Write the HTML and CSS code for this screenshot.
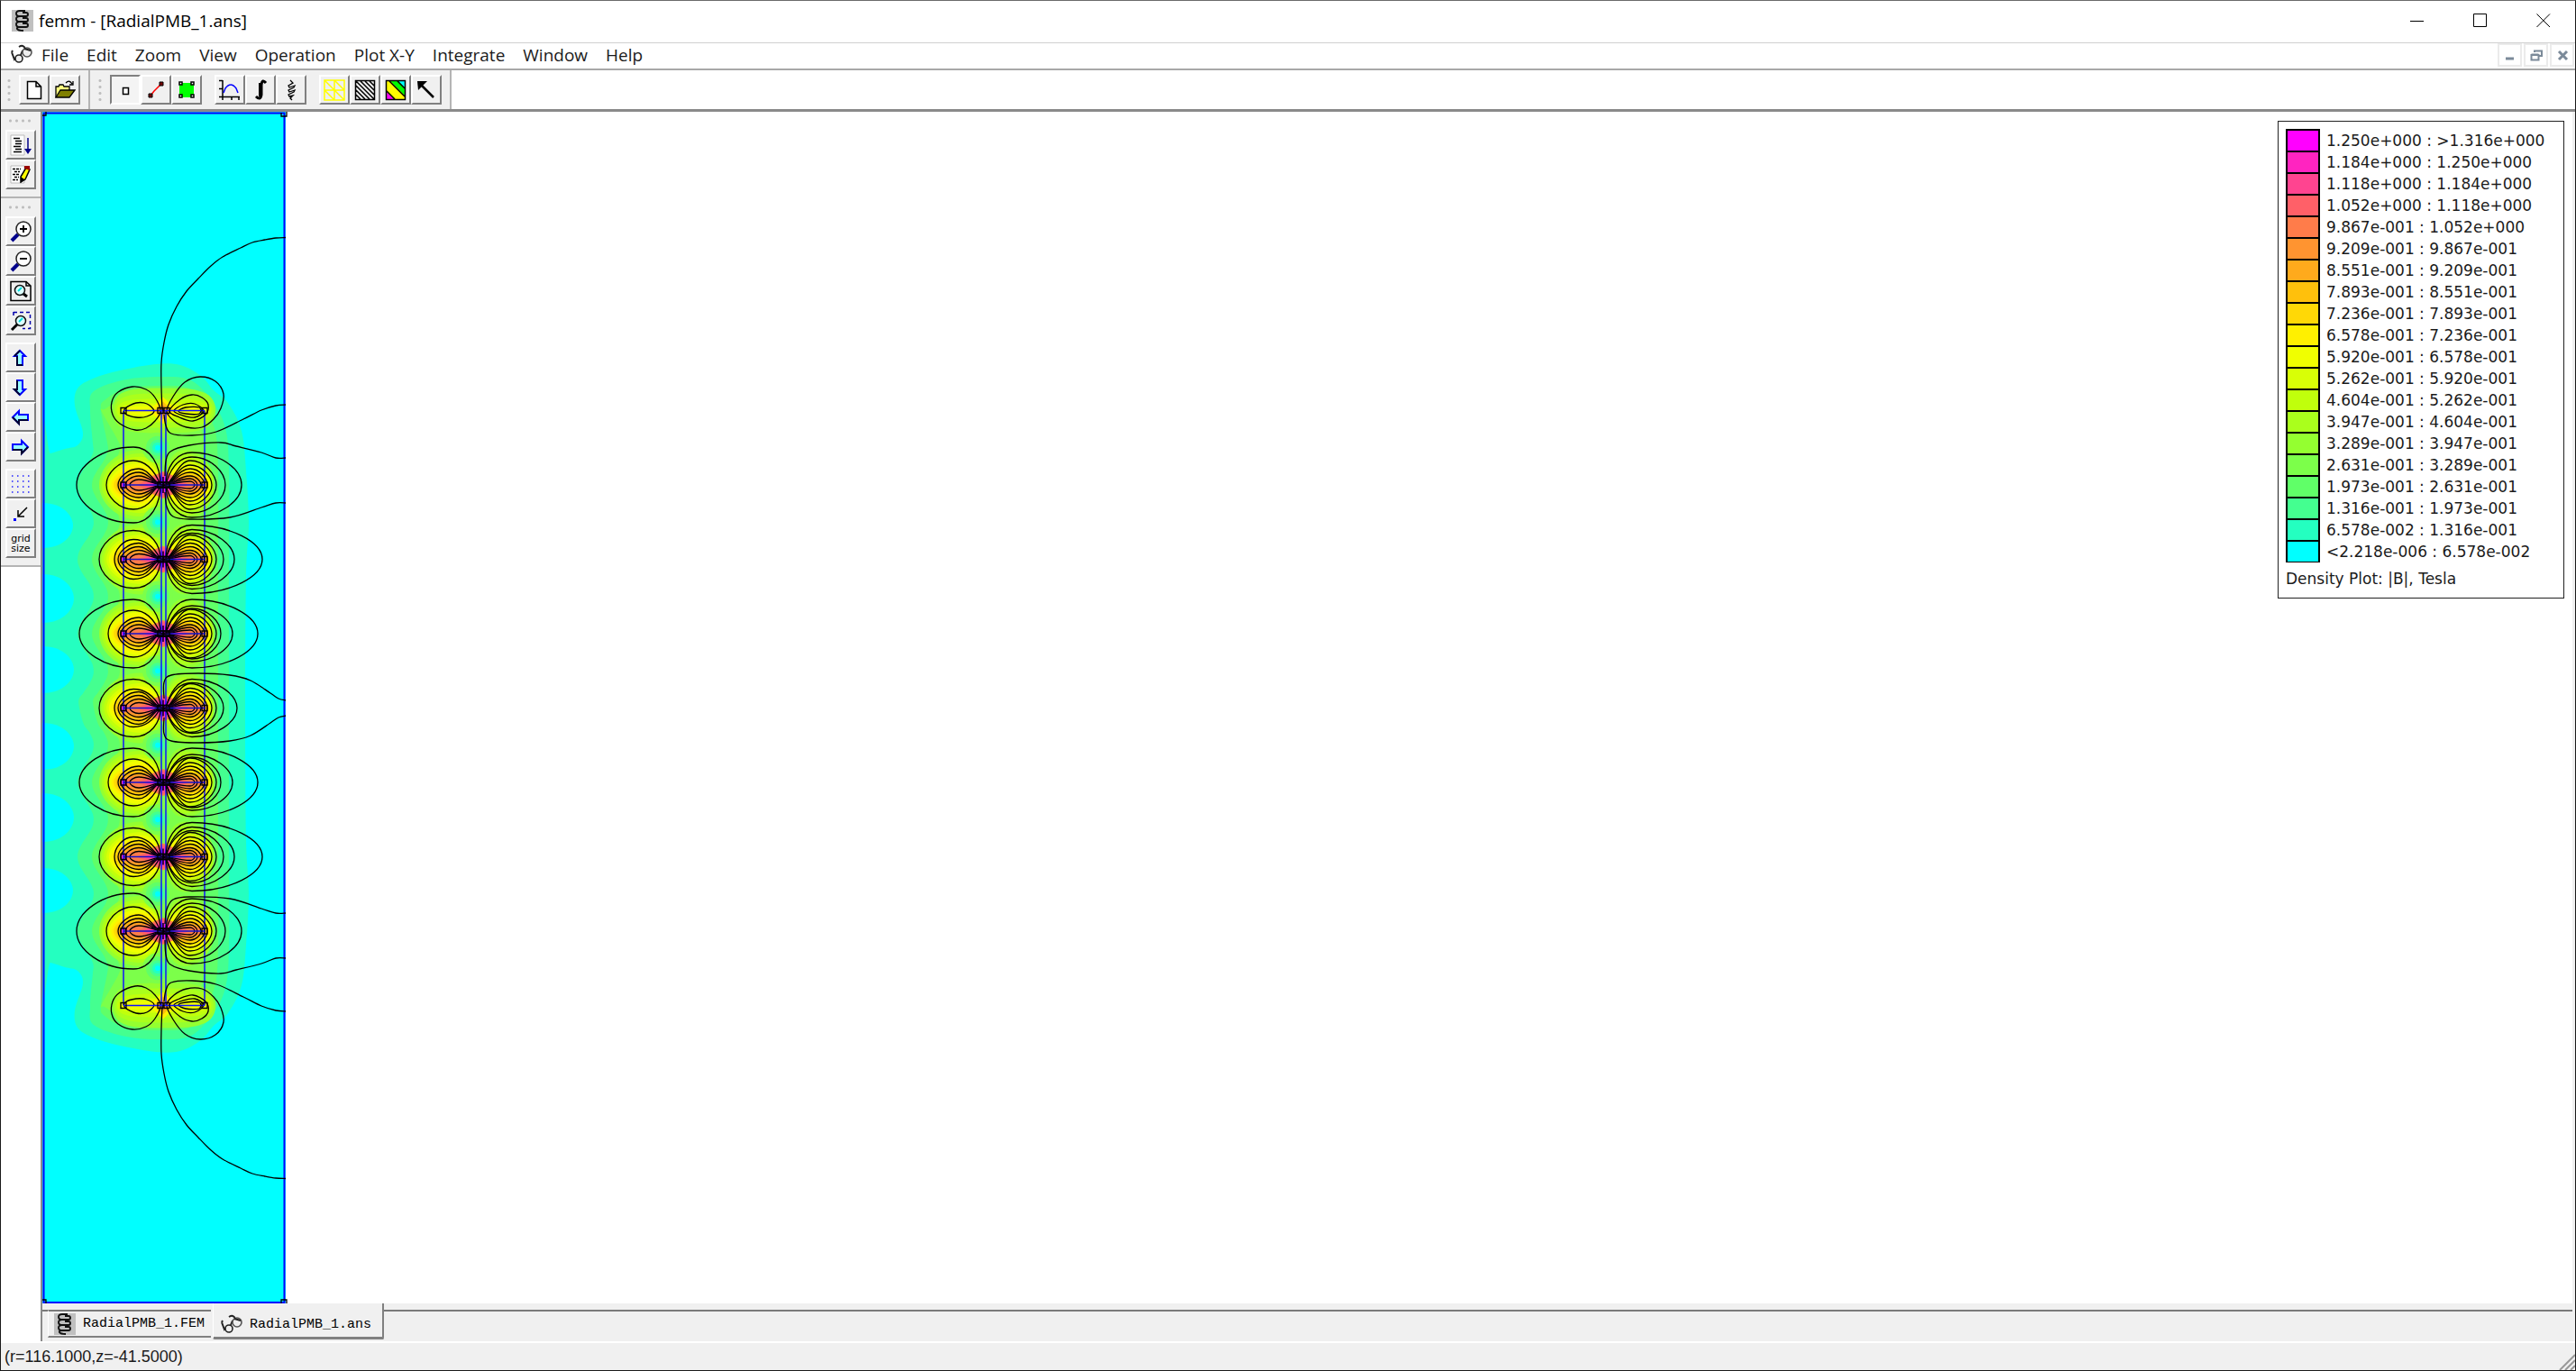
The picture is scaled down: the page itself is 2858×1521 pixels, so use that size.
FILE: index.html
```html
<!DOCTYPE html>
<html lang="en">
<head>
<meta charset="utf-8">
<title>femm - [RadialPMB_1.ans]</title>
<link rel="stylesheet" href="styles.css">
</head>
<body>
<svg class="defs" aria-hidden="true">
  <symbol id="coil" viewBox="0 0 24 24"><rect width="24" height="24" fill="#c0c0c0"/><path d="M15 1H9q-4 0-4 3t4 3h7q2 0 2-2t-2-2h-4M9 7q-4 0-4 3t4 3h7q2 0 2-2t-2-2h-4M9 13q-4 0-4 3t4 3h7q2 0 2-2t-2-2h-4M9 19q-4 0-3 2t7 2" fill="none" stroke="#111" stroke-width="1.900"/></symbol>
  <symbol id="glasses" viewBox="0 0 24 24"><path d="M1 9l3 8 4-4M9 3q5-3 7 2M1 9l1-2M11 12l2-5" fill="none" stroke="#222" stroke-width="2"/><circle cx="9" cy="16" r="4" fill="#eee" stroke="#222" stroke-width="1.6"/><circle cx="18" cy="9" r="5" fill="#eee" stroke="#555" stroke-width="1.6"/><path d="M15 5l7 2" stroke="#222" stroke-width="2"/></symbol>
</svg>
<header class="titlebar">
  <svg class="ico"><use href="#coil"/></svg>
  <h1 class="title">femm - [RadialPMB_1.ans]</h1>
  <div class="winbtns">
    <button aria-label="Minimize"><svg viewBox="0 0 16 16"><path d="M0 8.500H15"/></svg></button>
    <button aria-label="Maximize"><svg viewBox="0 0 16 16"><path d="M.5.500H14.500V14.500H.5Z"/></svg></button>
    <button aria-label="Close"><svg viewBox="0 0 16 16"><path d="M.5.500L15 15M15 .5L.5 15"/></svg></button>
  </div>
</header>
<nav class="menubar">
  <svg class="ico"><use href="#glasses"/></svg>
  <button>File</button><button>Edit</button><button>Zoom</button><button>View</button><button>Operation</button><button>Plot X-Y</button><button>Integrate</button><button>Window</button><button>Help</button>
  <div class="mdibtns">
    <button aria-label="Minimize document"><svg viewBox="0 0 14 14"><path d="M2 11H11" stroke-width="3"/></svg></button>
    <button aria-label="Restore document"><svg viewBox="0 0 14 14"><path d="M5 4V2.500H13V8H10M1.500 7H9.500V12.500H1.500ZM1.500 6.500H9.500" stroke-width="2"/></svg></button>
    <button aria-label="Close document"><svg viewBox="0 0 14 14"><path d="M3 3L12 12M12 3L3 12" stroke-width="3"/></svg></button>
  </div>
</nav>
<div class="toolbars">
  <div class="bar">
    <span class="grip"></span>
    <div class="group">
      <button class="tool" aria-label="New"><svg viewBox="0 0 24 24"><path d="M4.500 2.500H14L19.500 8V21.500H4.500ZM14 2.500V8H19.500" fill="#fff" stroke="#000" stroke-width="1.500"/></svg></button>
      <button class="tool" aria-label="Open"><svg viewBox="0 0 24 24"><path d="M2 20V8H5L6 6H10L11 8H17V12" fill="#ffff80" stroke="#000" stroke-width="1.300"/><path d="M2 20L7 12H23L17 20Z" fill="#808000" stroke="#000" stroke-width="1.300"/><path d="M13 4Q17 0 20 5M21 2V6H17" fill="none" stroke="#000" stroke-width="1.300"/></svg></button>
    </div>
  </div>
  <div class="bar">
    <span class="grip"></span>
    <div class="group">
      <button class="tool pressed" aria-label="Point mode"><svg viewBox="0 0 24 24"><path d="M9.500 9.500H15.500V16.500H9.500Z" fill="#fff" stroke="#000" stroke-width="1.500"/></svg></button>
      <button class="tool" aria-label="Line mode"><svg viewBox="0 0 24 24"><path d="M6 18L10 13 12 11 18 5" fill="none" stroke="#f00" stroke-width="1.500"/><path d="M4 16H8V20H4ZM16 3H20V7H16Z" fill="#700" stroke="#000"/></svg></button>
      <button class="tool" aria-label="Area mode"><svg viewBox="0 0 24 24"><path d="M4 4H20V20H4Z" fill="#0f0"/><path d="M4 3H7V6H4ZM17 3H20V6H17ZM4 17H7V20H4ZM17 17H20V20H17Z" fill="#fff" stroke="#000" stroke-width="1.500"/></svg></button>
    </div>
    <div class="group">
      <button class="tool" aria-label="Plot values"><svg viewBox="0 0 24 24"><path d="M4 1V20M0 1.500H4M0 10.500H4M0 19.500H23M14 20V23M22 20V23M4 20V23" fill="none" stroke="#000" stroke-width="1.500"/><path d="M5 15L7 10Q13 2 19 10L21 15" fill="none" stroke="#00f" stroke-width="1.500"/></svg></button>
      <button class="tool" aria-label="Line integral"><svg viewBox="0 0 24 24"><path d="M18 4Q14-1 13 6V17Q12 24 7 19" fill="none" stroke="#000" stroke-width="3"/><path d="M12 4V19" stroke="#000" stroke-width="4"/></svg></button>
      <button class="tool" aria-label="Circuit properties"><svg viewBox="0 0 24 24"><path d="M11 1L14 4 9 7 10 9 16 7 15 9 9 12 10 14 16 12 15 14 9 17 10 19 14 18 11 21 13 23" fill="none" stroke="#000" stroke-width="1.300"/></svg></button>
    </div>
    <div class="group">
      <button class="tool" aria-label="Show mesh"><svg viewBox="0 0 24 24"><path d="M1 1H23V23H1ZM12 1V23M1 12H23M1 1L23 23M12 1L23 12M1 12L12 23" fill="none" stroke="#ff0" stroke-width="1.500"/></svg></button>
      <button class="tool" aria-label="Contour plot"><svg viewBox="0 0 24 24"><path d="M1.500 1.500H22.500V22.500H1.500ZM2 2L22 22M7 2L22 17M12 2L22 12M17 2L22 7M2 7L17 22M2 12L12 22M2 17L7 22" fill="none" stroke="#000" stroke-width="1.500"/></svg></button>
      <button class="tool" aria-label="Density plot"><svg viewBox="0 0 24 24"><path d="M1 1H23V23H1Z" fill="#ff0"/><path d="M5 1L23 19V1Z" fill="#0f0"/><path d="M14 1L23 10V1Z" fill="#0ff"/><path d="M1 13L11 23H1Z" fill="#f0f"/><path d="M1.500 1.500H22.500V22.500H1.500ZM5 2L22 19M14 2L22 10M2 13L11 22" fill="none" stroke="#000" stroke-width="1.500"/></svg></button>
      <button class="tool" aria-label="Vector plot"><svg viewBox="0 0 24 24"><path d="M5 5L20 20" stroke="#000" stroke-width="2.500"/><path d="M2 2H13L3 12Z"/></svg></button>
    </div>
  </div>
</div>
<div class="main">
  <aside class="side">
    <div class="sidebar">
      <span class="vgrip"></span>
      <div class="vgroup">
        <button class="tool" aria-label="Console"><svg viewBox="0 0 24 24"><path d="M1 1H16V23H1Z" fill="#fff" stroke="#bbb"/><path d="M4 4.500H11M6 7.500H13M6 10.500H13M4 13.500H12M6 16.500H13M4 19.500H13" stroke="#000" stroke-width="1.500"/><path d="M20 4V18" stroke="#008" stroke-width="1.500"/><path d="M16 16H24L20 22Z" fill="#008"/></svg></button>
        <button class="tool" aria-label="Run script"><svg viewBox="0 0 24 24"><path d="M1 2H16V21H1Z" fill="#fff" stroke="#bbb"/><path d="M3 5.500H12M5 8.500H11M3 11.500H10M5 14.500H10M3 17.500H9" stroke="#000" stroke-width="1.500" stroke-dasharray="3 1"/><path d="M18 4L22 6 17 17 12 20 12 14Z" fill="#ff0" stroke="#000" stroke-width="1.500"/><path d="M12 14L16 17 12 21Z"/><path d="M16 2H22V7L16 5Z" fill="#900"/></svg></button>
      </div>
    </div>
    <div class="sidebar">
      <span class="vgrip"></span>
      <div class="vgroup">
        <button class="tool" aria-label="Zoom in"><svg viewBox="0 0 24 24"><path d="M2 22L9 15" stroke="#00008b" stroke-width="4"/><circle cx="15" cy="9" r="8" fill="#fff" stroke="#222" stroke-width="1.500"/><path d="M11 9H19M15 5V13" stroke="#000" stroke-width="1.800"/></svg></button>
        <button class="tool" aria-label="Zoom out"><svg viewBox="0 0 24 24"><path d="M2 22L9 15" stroke="#00008b" stroke-width="4"/><circle cx="15" cy="9" r="8" fill="#fff" stroke="#222" stroke-width="1.500"/><path d="M11 9H19" stroke="#000" stroke-width="1.800"/></svg></button>
        <button class="tool" aria-label="Zoom to fit"><svg viewBox="0 0 24 24"><path d="M1 1.500H18L23 6V22.500H1Z" fill="#eee" stroke="#000" stroke-width="1.500"/><path d="M18 1V6H23" fill="none" stroke="#000" stroke-width="1.500"/><circle cx="11" cy="11" r="5.500" fill="#dff" stroke="#111" stroke-width="1.500"/><path d="M15 15L19 18" stroke="#000" stroke-width="3"/><path d="M9 12L13 8" stroke="#0dd" stroke-width="2"/></svg></button>
        <button class="tool" aria-label="Zoom window"><svg viewBox="0 0 24 24"><path d="M4 2.500H22.500V20.500H14M4 2V8" fill="none" stroke="#00a" stroke-width="1.500" stroke-dasharray="4 3"/><circle cx="12" cy="12" r="5.500" fill="#dff" stroke="#111" stroke-width="1.500"/><path d="M2 22L8 16" stroke="#000" stroke-width="3"/><path d="M10 13L14 9" stroke="#0dd" stroke-width="2"/></svg></button>
      </div>
      <div class="vgroup">
        <button class="tool" aria-label="Pan up"><svg viewBox="0 0 24 24"><path class="arrow" d="M11 4L17 10H14V20H8V10H5Z"/><path class="shade" d="M5 10L11 4M8 10V20H14"/></svg></button>
        <button class="tool" aria-label="Pan down"><svg viewBox="0 0 24 24"><path class="arrow" d="M11 20L17 14H14V4H8V14H5Z"/><path class="shade" d="M8 4V14H5L11 20"/></svg></button>
        <button class="tool" aria-label="Pan left"><svg viewBox="0 0 24 24"><path class="arrow" d="M3 12L10 5V9H20V15H10V19Z"/><path class="shade" d="M3 12L10 19V15H20"/></svg></button>
        <button class="tool" aria-label="Pan right"><svg viewBox="0 0 24 24"><path class="arrow" d="M20 12L13 5V9H3V15H13V19Z"/><path class="shade" d="M3 15H13V19L20 12"/></svg></button>
      </div>
      <div class="vgroup">
        <button class="tool" aria-label="Show grid"><svg viewBox="0 0 24 24"><path d="M2 3H22M2 9H22M2 15H22M2 21H22" stroke="#22f" stroke-width="1.500" stroke-dasharray="1.500 4.500"/></svg></button>
        <button class="tool" aria-label="Snap to grid"><svg viewBox="0 0 24 24"><path d="M19 5L9 15M9 8V15H16" fill="none" stroke="#000" stroke-width="1.500"/><path d="M4 17H7V20H4Z" fill="#00f"/></svg></button>
        <button class="tool gridsize">grid<br>size</button>
      </div>
    </div>
  </aside>
  <section class="document">
    <div class="view">
      <svg class="plot" id="plot" viewBox="47 124 273 1322" preserveAspectRatio="xMinYMin meet" role="img" aria-label="Flux density plot"></svg>
      <div class="legend">
        <ul id="legend"></ul>
        <p>Density Plot: |B|, Tesla</p>
      </div>
    </div>
    <div class="tabs">
      <span class="edge"></span>
      <button class="tab"><svg class="ico"><use href="#coil"/></svg>RadialPMB_1.FEM</button>
      <button class="tab active"><svg class="ico"><use href="#glasses"/></svg>RadialPMB_1.ans</button>
      <span class="rest"></span>
    </div>
  </section>
</div>
<footer class="status"><span>(r=116.1000,z=-41.5000)</span>
  <svg class="resize" viewBox="0 0 18 18"><path d="M1 18L18 1M7 18L18 7M13 18L18 13" stroke="#999" stroke-width="2"/></svg>
</footer>
<script src="plot.js"></script>
</body>
</html>
```
FILE: styles.css
```css
* { box-sizing: border-box; }
body {
  margin: 0;
  height: 100vh;
  display: flex;
  flex-direction: column;
  background: #fff;
  border: 1px solid #1a1a1a;
  border-top-color: #6b6b6b;
  font-family: "Open Sans", "Noto Sans", sans-serif;
  color: #1b1b1b;
  overflow: hidden;
}
button {
  font: inherit;
  color: inherit;
  background: none;
  border: 0;
  padding: 0;
  margin: 0;
}
.defs { position: absolute; width: 0; height: 0; }
.ico { width: 24px; height: 24px; flex: none; }

.titlebar {
  display: flex;
  align-items: center;
  height: 47px;
  padding: 0 0 2px 12px;
  gap: 6px;
  border-bottom: 1px solid #d0d0d0;
}
.title { margin: 0; font-size: 19px; font-weight: 400; line-height: 28px; color: #000; }
.winbtns { margin-left: auto; display: flex; }
.winbtns button { width: 70px; height: 44px; display: grid; place-items: center; }
.winbtns svg { width: 16px; height: 16px; fill: none; stroke: #000; }

.menubar {
  display: flex;
  align-items: center;
  height: 30px;
  padding: 0 0 2px 11px;
  font-size: 19px;
  line-height: 26px;
  border-bottom: 2px solid #a8a8a8;
}
.menubar > button { padding: 0 10px; white-space: nowrap; }
.mdibtns { margin-left: auto; display: flex; gap: 2px; padding-right: 1px; }
.mdibtns button { width: 27px; height: 26px; border: 2px solid #ebebeb; display: grid; place-items: center; }
.mdibtns svg { width: 14px; height: 14px; fill: none; stroke: #7b8a99; }

.toolbars {
  display: flex;
  height: 46px;
  border-bottom: 3px solid #8a8a8a;
}
.bar {
  display: flex;
  align-items: center;
  background: #f0f0f0;
  border-right: 2px solid #b4b4b4;
  padding: 0 9px 0 7px;
}
.bar + .bar { padding-left: 9px; }
.grip {
  width: 4px;
  height: 28px;
  margin-right: 9px;
  background: radial-gradient(circle, #bdbdbd 1px, transparent 2px) 0 0 / 4px 7px;
}
.group { display: flex; }
.group + .group { margin-left: 14px; }
.tool {
  width: 34px;
  height: 33px;
  display: grid;
  place-items: center;
  background: #f0f0f0;
  border: 2px solid;
  border-color: #fff #808080 #808080 #fff;
}
.tool svg { width: 24px; height: 24px; }
.tool.pressed { border-color: #808080 #fff #fff #808080; background: #f4f4f4; }

.main { flex: 1; min-height: 0; display: flex; }
.side { width: 44px; flex: none; background: #fff; }
.sidebar {
  background: #f0f0f0;
  padding: 8px 4px 8px 5px;
  border-bottom: 2px solid #b4b4b4;
}
.vgrip {
  display: block;
  width: 28px;
  height: 4px;
  margin: 0 0 8px 2px;
  background: radial-gradient(circle, #bdbdbd 1px, transparent 2px) 0 0 / 7px 4px;
}
.vgroup + .vgroup { margin-top: 8px; }
.arrow { fill: #9ff; stroke: #00f; stroke-width: 2; }
.shade { fill: none; stroke: #003; stroke-width: 2; }
.gridsize { font-size: 11px; line-height: 11px; font-family: "DejaVu Sans", sans-serif; color: #000; text-align: center; }

.document {
  flex: 1;
  min-width: 0;
  display: flex;
  flex-direction: column;
  border-left: 2px solid #8a8a8a;
  border-right: 3px solid #f0f0f0;
}
.view { flex: 1; min-height: 0; display: flex; background: #fff; }
.plot { height: 100%; flex: none; }
.legend {
  margin: 10px 9px 0 auto;
  align-self: flex-start;
  width: 318px;
  padding: 8px;
  border: 1px solid #222;
  font-family: "DejaVu Sans", sans-serif;
  font-size: 17px;
}
.legend ul { list-style: none; margin: 0; padding: 0; }
.legend li { display: flex; height: 24px; line-height: 26px; white-space: pre; }
.swatch { width: 38px; height: 25px; margin-right: 7px; border: 2px solid #000; border-bottom-width: 1px; flex: none; }
.legend p { margin: 0; padding-top: 6px; line-height: 26px; }

.tabs {
  display: flex;
  height: 42px;
  background: #f0f0f0;
  font-family: "Liberation Mono", monospace;
  font-size: 15px;
}
.edge, .rest, .tab:not(.active) { margin-top: 7px; border-top: 2px solid #7a7a7a; }
.edge { width: 6px; }
.rest { flex: 1; }
.tab { display: flex; align-items: center; gap: 8px; color: #000; height: 40px; }
.tab:not(.active) {
  height: 31px;
  width: 181px;
  padding-left: 6px;
  border-left: 1px solid #fff;
  border-bottom: 2px solid #808080;
}
.tab.active {
  width: 190px;
  margin-left: 2px;
  padding: 14px 0 4px 8px;
  border-right: 2px solid #808080;
  border-bottom: 3px solid #808080;
  border-left: 1px solid #fff;
  border-radius: 0 0 2px 2px;
}
.status {
  display: flex;
  align-items: center;
  justify-content: space-between;
  height: 32px;
  padding-left: 4px;
  background: #f0f0f0;
  border-top: 2px solid #fff;
  font-family: "Liberation Sans", Arial, sans-serif;
  font-size: 18px;
}
.resize { width: 18px; height: 18px; align-self: flex-end; }
```
FILE: plot.js
```js
// Colour bands, highest flux density first.
const BANDS = [
  ['#ff00ff', '1.250e+000 : >1.316e+000'], ['#ff24c0', '1.184e+000 : 1.250e+000'],
  ['#ff4490', '1.118e+000 : 1.184e+000'], ['#ff6068', '1.052e+000 : 1.118e+000'],
  ['#ff7c4a', '9.867e-001 : 1.052e+000'], ['#ff9430', '9.209e-001 : 9.867e-001'],
  ['#ffaa1c', '8.551e-001 : 9.209e-001'], ['#ffc00c', '7.893e-001 : 8.551e-001'],
  ['#ffd806', '7.236e-001 : 7.893e-001'], ['#fff000', '6.578e-001 : 7.236e-001'],
  ['#f0ff00', '5.920e-001 : 6.578e-001'], ['#d8ff06', '5.262e-001 : 5.920e-001'],
  ['#c0ff0c', '4.604e-001 : 5.262e-001'], ['#aaff1c', '3.947e-001 : 4.604e-001'],
  ['#94ff30', '3.289e-001 : 3.947e-001'], ['#7cff4a', '2.631e-001 : 3.289e-001'],
  ['#60ff68', '1.973e-001 : 2.631e-001'], ['#44ff90', '1.316e-001 : 1.973e-001'],
  ['#24ffc0', '6.578e-002 : 1.316e-001'], ['#00ffff', '<2.218e-006 : 6.578e-002']
];
document.getElementById('legend').innerHTML = BANDS.map(([c, t]) =>
  `<li><span class="swatch" style="background:${c}"></span>${t.replace('<', '&lt;').replace('>', '&gt;')}</li>`).join('');

const MID = 785.5, PITCH = 82.5;
const out = [];
const color = n => BANDS[19 - n][0];
const fill = (d, c) => out.push(`<path d="${d}" fill="${c}"/>`);
const line = (d, c = '#000', w = 1.3) => out.push(`<path d="${d}" fill="none" stroke="${c}" stroke-width="${w}"/>`);

// Smooth curve through a list of points.
function curve(p, closed) {
  const n = p.length, at = i => closed ? p[(i + n) % n] : p[Math.max(0, Math.min(n - 1, i))];
  let d = `M${p[0]}`;
  for (let i = 0; i < (closed ? n : n - 1); i++) {
    const [a, b, c, e] = [at(i - 1), at(i), at(i + 1), at(i + 2)];
    d += `C${b[0] + (c[0] - a[0]) / 6} ${b[1] + (c[1] - a[1]) / 6} ${c[0] - (e[0] - b[0]) / 6} ${c[1] - (e[1] - b[1]) / 6} ${c}`;
  }
  return d + (closed ? 'Z' : '');
}
const flip = p => p.map(([x, y]) => [x, 2 * MID - y]);

// Loop that leaves the pole at x0, peaks at xm and turns round at x1.
// A larger taper makes the pole end more pointed.
function loop(x0, xm, x1, y, h, taper = 0) {
  const d = xm - x0, ax = x0 + d * taper * .4, ay = h * (.5 - taper * .15), bx = x0 + d * (.35 + taper * .25);
  const ex = xm + (x1 - xm) * .55, ey = h * (.5 - taper * .1);
  return `M${x0} ${y}C${ax} ${y - ay} ${bx} ${y - h} ${xm} ${y - h}C${ex} ${y - h} ${x1} ${y - ey} ${x1} ${y}` +
    `C${x1} ${y + ey} ${ex} ${y + h} ${xm} ${y + h}C${bx} ${y + h} ${ax} ${y + ay} ${x0} ${y}Z`;
}

// Background and the wide outer bands.
fill('M47 124H317V1446H47Z', color(0));
const outer = [[46, 505], [56, 503], [72, 498], [86, 494], [92, 480], [83, 450], [86, 431], [103, 420], [133, 411], [173, 404], [200, 405], [223, 417], [237, 433], [253, 447], [268, 478], [273, 523], [276, 580], [273, 640], [272, 786]];
fill(curve(outer.concat(flip(outer).reverse().slice(1)), true), color(1));
[[583, 25, 34], [664, 27, 35], [743, 26, 35]].forEach(([y, h, w]) => [y, 2 * MID - y].forEach(cy =>
  fill(`M47 ${cy - h}C${47 + w * .7} ${cy - h} ${47 + w} ${cy - h * .4} ${47 + w} ${cy}S${47 + w * .7} ${cy + h} 47 ${cy + h}Z`, color(0))));

// level, mean left x, ripple, right x, top of the cap
[[2, 95, 9, 254, 418], [3, 111, 9, 242, 428], [4, 122, 11, 227, 438]].forEach(([n, xl, amp, xr, top]) => {
  const left = [], s = n === 2 ? 108 : 120;
  for (let y = 490; y <= MID; y += PITCH / 8) left.push([xl - amp * Math.cos(2 * Math.PI * (y - MID) / PITCH), y]);
  const cap = [[xr, MID], [xr, 640], [xr, 520], [xr - 4, 475], [xr - 18, top + 28], [212, top + 4], [180, top], [140, top + 3], [s - 4, top + 16], [s - 8, 455]];
  const half = cap.concat(left);
  fill(curve(half.concat(flip(half).reverse().slice(1)), true), color(n));
});

const poles = [0, 1, 2, 3, 4, 5, 6, 7, 8].map(i => MID + (i - 4) * PITCH);
poles.forEach((y, i) => {
  if (i === 0 || i === 8) {
    [[5, 28, 25], [6, 22, 19], [7, 16, 13], [8, 10, 8], [9, 6, 5]].forEach(([n, w, h]) => {
      fill(`M180 ${y - h}C150 ${y - h} ${136 - w * .4} ${y - h} ${136 - w * .4} ${y}S150 ${y + h} 180 ${y + h}S${228 + w * .4} ${y + h} ${228 + w * .4} ${y}S210 ${y - h} 180 ${y - h}Z`, color(n));
    });
    [[10, 15], [12, 10], [14, 6]].forEach(([n, r]) =>
      fill(`M${181 - r} ${y}L181 ${y - r} ${181 + r} ${y} 181 ${y + r}Z`, color(n)));
    return;
  }
  for (let n = 5; n <= 15; n++) {
    const k = (n - 5) / 10, h = 33 * Math.pow(1 - k, 1.2) + 6;
    fill(loop(182, 155, 110 + k * 27, y, h, k), color(n));
    fill(loop(182, 205, 238 - k * 11, y, h * (1 - k * .2), k), color(n));
  }
  for (let n = 15; n <= 19; n++) {
    const w = (20 - n) * 7, h = 5 + (20 - n) * 2;
    fill(`M${180 - w} ${y}L181 ${y - h} ${182 + w} ${y} 181 ${y + h}Z`, color(n));
  }
  fill(`M134 ${y - 3}H141V${y + 4}H134Z`, '#ff24c0');
});

// Low-field spots between the poles.
for (let i = 0; i < 8; i++) {
  const y = MID + (i - 3.5) * PITCH;
  [[17, 4], [13, 3], [9, 2], [6, 1], [3, 0]].forEach(([r, n]) =>
    out.push(`<ellipse cx="175" cy="${y}" rx="${r}" ry="${r}" fill="${color(n)}"/>`));
}

// Geometry of the bearing.
line('M48.500 125.500H315.500V1445H48.500Z', '#00f', 2);
[137, 179, 184, 227].forEach(x => line(`M${x} ${poles[0]}V${poles[8]}`, '#11f', 1.5));

// Flux lines: turning x and half height for each kind of pole.
const inner = { left: [[131, 18], [134, 14], [139, 10], [144, 6]], right: [[240, 27], [235, 22], [230, 18], [227, 14], [223, 10], [219, 7], [216, 4]] };
const kinds = {
  B: { left: [[85, 42], [118, 27]], right: [[268, 36], [250, 31]] },
  C: { left: [[110, 32], [127, 22]], right: [[291, 38], [260, 33], [248, 29]] },
  D: { left: [[88, 38], [120, 26]], right: [[286, 38], [258, 31], [245, 28]] },
  E: { left: [[110, 32], [127, 21]], right: [[263, 32], [248, 28]] }
};
'BCDEDCB'.split('').forEach((k, i) => {
  const y = poles[i + 1];
  kinds[k].left.forEach(([x, h]) => line(loop(178, 148, x, y, h, h > 30 ? 0 : .4)));
  inner.left.forEach(([x, h]) => line(loop(178, 154, x, y, h, 1)));
  kinds[k].right.forEach(([x, h]) => line(loop(184, 213, x, y, h, h > 35 ? 0 : .3)));
  inner.right.forEach(([x, h]) => line(loop(185, 211, x, y, h, .9)));
  line(`M137 ${y}H227`, '#11c', 1.5);
  line(`M168 ${y - 4}L196 ${y + 5}M168 ${y + 5}L196 ${y - 4}M181 ${y - 9}V${y + 9}M173 ${y - 3}H191M173 ${y + 3}H191`, '#102', 1.6);
});

const open = [
  [[317, 263.5], [306, 264], [294, 266], [280, 269], [267, 275], [247, 285], [234, 295], [220, 309], [207, 323], [196, 340], [187, 360], [182, 380], [179, 402], [179, 430], [180, 455]],
  [[182, 460], [184, 472], [190, 481], [213, 483], [240, 479], [270, 465], [290, 455], [306, 450], [317, 449]],
  [[183, 528], [184, 512], [189, 501], [210, 494], [245, 491], [262, 495], [290, 502], [306, 508], [317, 508]],
  [[183, 546], [185, 562], [192, 573], [210, 576], [255, 574], [290, 563], [306, 558], [317, 558]],
  [[182, 775], [182, 757], [190, 749], [220, 747], [255, 749], [278, 755], [300, 769], [309, 775], [317, 777]]
];
open.forEach(p => { line(curve(p)); line(curve(flip(p))); });

[[[178, 456], [172, 441], [162, 432], [147, 429], [131, 435], [124, 446], [125, 460], [133, 470], [150, 477], [162, 475], [172, 467]],
 [[171, 456], [163, 448], [151, 447], [139, 453], [139, 459], [151, 463], [163, 462]],
 [[185, 456], [192, 440], [205, 424], [222, 418], [239, 423], [248, 437], [245, 453], [237, 465], [224, 474], [207, 474], [193, 467]],
 [[188, 456], [200, 443], [213, 438], [224, 441], [231, 449], [228, 460], [214, 467], [199, 463]],
 [[193, 456], [203, 449], [216, 448], [226, 456], [216, 463], [203, 461]],
 [[198, 456], [206, 452], [221, 452], [221, 459], [206, 459]]
].forEach(p => { line(curve(p, true)); line(curve(flip(p), true)); });

[poles[0], poles[8]].forEach(y => line(`M137 ${y}H227`, '#11f', 1.5));
poles.forEach(y => [137, 178, 185, 227].forEach(x => line(`M${x - 3} ${y - 3}h6v6h-6z`, '#000', 1.3)));
line('M47 128H51V124M312 125V129H318V124M47 1442H51V1446M312 1446V1442H318V1446');

document.getElementById('plot').innerHTML = out.join('');
```
